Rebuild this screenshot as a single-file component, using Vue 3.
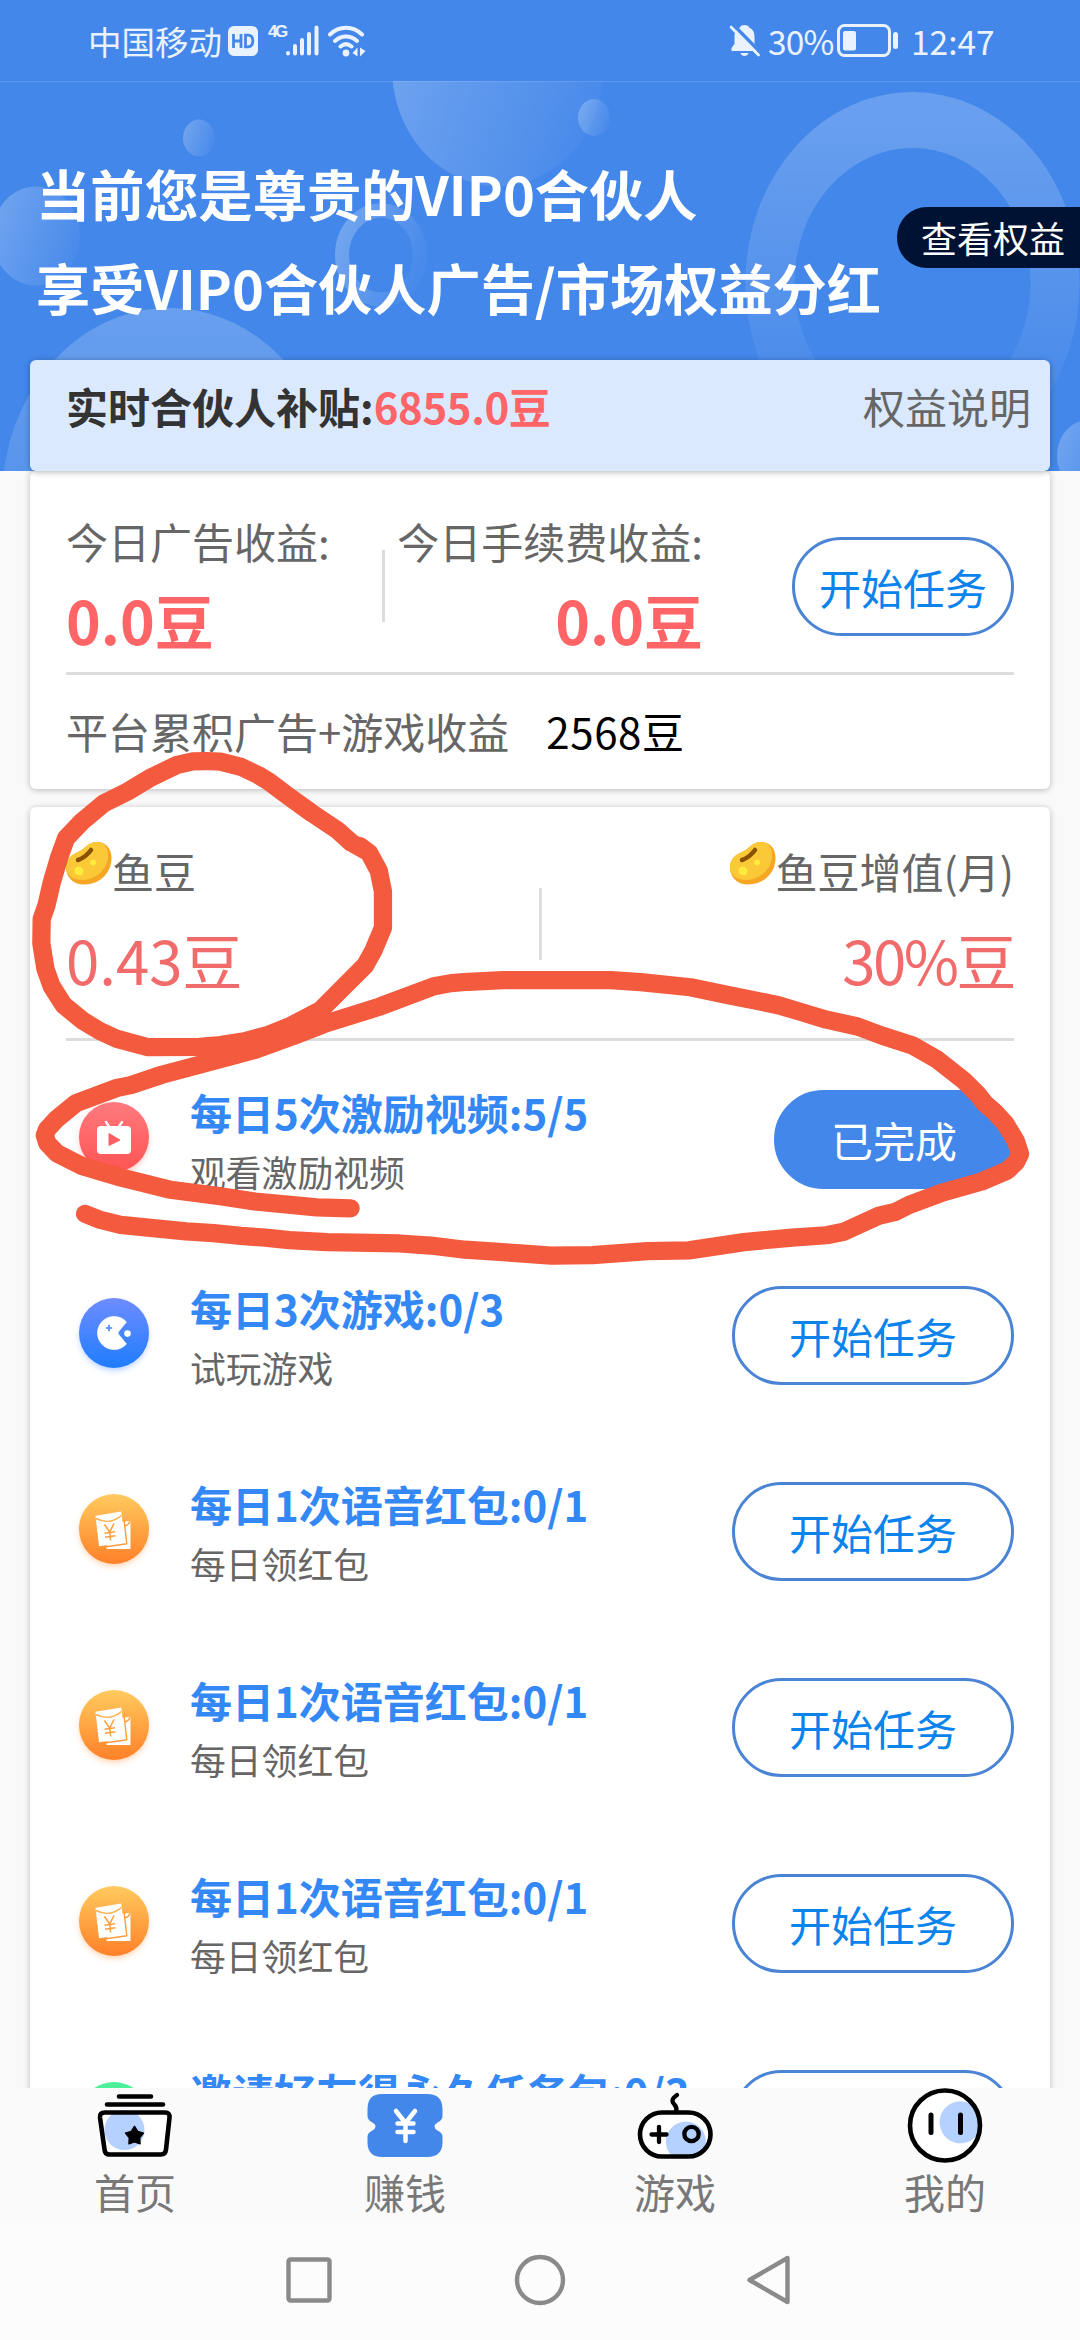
<script setup>
const tasks = [
  { icon: 'video', title: '每日5次激励视频:5/5', desc: '观看激励视频', done: true },
  { icon: 'game', title: '每日3次游戏:0/3', desc: '试玩游戏' },
  { icon: 'packet', title: '每日1次语音红包:0/1', desc: '每日领红包' },
  { icon: 'packet', title: '每日1次语音红包:0/1', desc: '每日领红包' },
  { icon: 'packet', title: '每日1次语音红包:0/1', desc: '每日领红包' },
  { icon: 'invite', title: '邀请好友得永久任务包:0/3', desc: '' }
]
const iconFill = { video: 'url(#gVideo)', game: 'url(#gGame)', packet: 'url(#gPacket)', invite: '#4cf09a' }
const glow = { video: '#ff5c5c', game: '#3c82ff', packet: '#ff8a30', invite: '#4cf09a' }
const tabs = [
  { id: 'home', label: '首页' },
  { id: 'earn', label: '赚钱' },
  { id: 'game', label: '游戏' },
  { id: 'me', label: '我的' }
]
</script>

<template>
  <div class="screen">
    <header class="status">
      <span class="carrier">中国移动</span>
      <svg class="hd" width="30" height="30" viewBox="0 0 30 30">
        <rect width="30" height="30" rx="6" fill="#eaf2fe" />
        <path d="M5.500 8v14M13 8v14M5.500 15H13M17.500 9.200v11.600h2.500c3.600 0 4.800-2 4.800-5.800s-1.200-5.800-4.800-5.800z" fill="none" stroke="#4387ea" stroke-width="2.800" />
      </svg>
      <span class="net">4G</span>
      <svg class="signal" width="33" height="31" viewBox="0 0 33 31" stroke="#eaf2fe" stroke-width="4" stroke-linecap="round">
        <path d="M2 28v.5M9 21v7.500M16 15v13.500M23 9v19.500M30.500 2.500v26" />
      </svg>
      <svg class="wifi" width="38" height="32" viewBox="0 0 38 32" fill="none" stroke="#eaf2fe" stroke-width="4" stroke-linecap="round">
        <path d="M2 9.500C11 .5 25 .5 34 9.500M7 16c6.500-6 15.500-6 22 0M12.500 21.500c3.500-3 7.500-3 11 0" />
        <circle cx="18" cy="28" r="3.400" fill="#eaf2fe" stroke="none" />
        <path d="M29.500 22.500v9l-5-3.500zM32 22.500v9l5.500-5.500z" fill="#eaf2fe" stroke="none" />
      </svg>
      <svg class="bell" width="30" height="33" viewBox="0 0 30 33">
        <path d="M10 3.500c1-3.200 8-3.200 9 0 4 1.500 5.500 5 5.500 9v7.500l3 4v3H1.500v-3l3-4v-7.500c0-4 1.500-7.500 5.500-9zM10.500 29h8c-1 4-7 4-8 0z" fill="#eaf2fe" />
        <path d="M3 .5L31 29" stroke="#4387ea" stroke-width="3.500" />
        <path d="M1 3L28.500 31" stroke="#eaf2fe" stroke-width="2.800" stroke-linecap="round" />
      </svg>
      <span class="pct">30%</span>
      <svg class="battery" width="62" height="33" viewBox="0 0 62 33">
        <rect x="1.500" y="1.500" width="51" height="30" rx="6" fill="none" stroke="#eaf2fe" stroke-width="3" />
        <rect x="6" y="7" width="13" height="19.500" rx="2" fill="#eaf2fe" />
        <rect x="56" y="8" width="5" height="17" rx="2.500" fill="#eaf2fe" />
      </svg>
      <span class="clock">12:47</span>
    </header>

    <section class="hero">
      <svg class="bubbles" width="1080" height="390" viewBox="0 81 1080 390">
        <defs>
          <linearGradient id="bubble" x1="0" y1="0.200" x2="1" y2="0.600">
            <stop offset="0" stop-color="#fff" stop-opacity=".25" />
            <stop offset="1" stop-color="#fff" stop-opacity=".03" />
          </linearGradient>
          <linearGradient id="fall" x1="0" y1="0" x2="0" y2="1">
            <stop offset="0" stop-color="#fff" stop-opacity=".2" />
            <stop offset="1" stop-color="#fff" stop-opacity="0" />
          </linearGradient>
        </defs>
        <ellipse cx="498" cy="68" rx="106" ry="118" fill="url(#bubble)" />
        <ellipse cx="199" cy="138" rx="16" ry="18.500" fill="url(#bubble)" />
        <ellipse cx="594" cy="117.500" rx="16" ry="18.500" fill="url(#bubble)" />
        <ellipse cx="36" cy="236" rx="44" ry="49.500" fill="url(#bubble)" />
        <ellipse cx="381" cy="255" rx="39" ry="44.500" fill="none" stroke="url(#bubble)" stroke-width="14" />
        <ellipse cx="169" cy="499" rx="167" ry="191" fill="url(#fall)" />
        <circle r="163" transform="translate(912.500 283) scale(.875 1)" fill="none" stroke="url(#fall)" stroke-width="56" />
        <ellipse cx="1088" cy="456" rx="31" ry="36" fill="url(#bubble)" />
        <rect y="81" width="1080" height="1" fill="#fff" opacity=".12" />
      </svg>
      <div class="titles">
        <p>当前您是尊贵的VIP0合伙人</p>
        <p>享受VIP0合伙人广告/市场权益分红</p>
      </div>
      <div class="badge">查看权益</div>
      <div class="banner">
        <b class="subsidy">实时合伙人补贴:<span class="amount">6855.0豆</span></b>
        <span class="explain">权益说明</span>
      </div>
    </section>

    <main class="content">
      <section class="card income">
        <div class="income-row">
          <div class="col first">
            <p class="label">今日广告收益:</p>
            <p class="big">0.0豆</p>
          </div>
          <i class="vline"></i>
          <div class="col second">
            <p class="label">今日手续费收益:</p>
            <p class="big">0.0豆</p>
          </div>
          <button class="btn narrow">开始任务</button>
        </div>
        <div class="total">
          <span class="total-label">平台累积广告+游戏收益</span><span class="total-num">2568豆</span>
        </div>
      </section>

      <section class="card list">
        <div class="beans">
          <div v-for="(b, i) in [['鱼豆', '0.43豆'], ['鱼豆增值(月)', '30%豆']]" :key="i" class="bean-col" :class="{ right: i }">
            <p class="bean-label">
              <svg class="bean" width="46" height="44" viewBox="0 0 46 44">
                <path d="M12 10C19 7 22 0 31 0c10 0 15 8 14.500 17C45 31 34 42.500 18 42.500 7 42.500 0 35 0 25.500 0 17 5 13 12 10z" fill="#f6a623" />
                <path d="M12 10C19 7 22 0 31 0c8 0 11 6 11 14 0 13-12 24-26 24C7 38 0 33 0 25.500 0 17 5 13 12 10z" fill="#fbc838" />
                <path d="M12 18c6-2 10-6 13-10" stroke="#8a5200" stroke-width="4.500" stroke-linecap="round" fill="none" />
                <circle cx="13" cy="29" r="4.500" fill="#ffeb3b" /><circle cx="27" cy="20.500" r="3" fill="#ffeb3b" />
              </svg>
              <span>{{ b[0] }}</span>
            </p>
            <p class="bean-num">{{ b[1] }}</p>
          </div>
          <i class="vline mid"></i>
        </div>

        <div v-for="(t, i) in tasks" :key="i" class="task">
          <svg class="task-icon" width="90" height="90" viewBox="-45 -45 90 90">
            <defs>
              <linearGradient id="gVideo" x1="0" y1="0" x2="0" y2="1"><stop offset="0" stop-color="#ff7a7e" /><stop offset="1" stop-color="#ff5353" /></linearGradient>
              <linearGradient id="gGame" x1="0" y1="0" x2="0" y2="1"><stop offset="0" stop-color="#6f8cff" /><stop offset="1" stop-color="#1f7dff" /></linearGradient>
              <linearGradient id="gPacket" x1="0" y1="0" x2="0" y2="1"><stop offset="0" stop-color="#ffcb5e" /><stop offset="1" stop-color="#ff8028" /></linearGradient>
              <filter id="soft" x="-30%" y="-30%" width="160%" height="160%"><feGaussianBlur stdDeviation="3" /></filter>
            </defs>
            <circle cy="3" r="34" :fill="glow[t.icon]" opacity=".4" filter="url(#soft)" />
            <circle r="35" :fill="iconFill[t.icon]" />
            <g v-if="t.icon === 'video'">
              <path d="M-8-15l4 6M8-15l-4 6" stroke="#fff" stroke-width="2.400" stroke-linecap="round" />
              <rect x="-17" y="-11" width="34" height="28" rx="4" fill="#fff" />
              <path d="M-5-3.500v12L6 3z" fill="#ff5f62" stroke="#ff5f62" stroke-width="1" stroke-linejoin="round" />
            </g>
            <g v-else-if="t.icon === 'game'">
              <path d="M12.500-11A16.600 16.600 0 1 0 12.500 11L4.500 1.200Q3.600 0 4.500-1.200z" fill="#fff" stroke="#fff" stroke-width=".6" stroke-linejoin="round" />
              <circle cx="13.500" cy=".6" r="3.300" fill="#fff" />
              <path d="M-5-8.200v6.400M-8.200-5h6.400" stroke="#4b86ff" stroke-width="1.700" />
            </g>
            <g v-else-if="t.icon === 'packet'">
              <path d="M9-7.500l7.500-.5V20H-7.500v-2z" fill="#fff" />
              <path d="M-18.500-13.300L7.200-17.500l4.200 31.300-26.400 3.500z" fill="#fff" />
              <path d="M13 14.800l-21 3M10-9.500l2.800 24.300M11-3q4-1.500 5-4.500" fill="none" stroke="#ff9d3c" stroke-width="1.400" />
              <path d="M-18-10.500Q-4-3.500 7.300-13.500" fill="none" stroke="#ffad48" stroke-width="1.400" />
              <path d="M-9.500-4.500l5.200 7.500 4.300-8.500M-4.300 3l1 8.500M-9.500 4.200l10.500-1.400M-9 8.200l10.500-1.400" fill="none" stroke="#ff9f3e" stroke-width="1.500" />
            </g>
          </svg>
          <div class="task-text">
            <p class="task-title">{{ t.title }}</p>
            <p class="task-desc">{{ t.desc }}</p>
          </div>
          <button class="btn" :class="{ done: t.done }">{{ t.done ? '已完成' : '开始任务' }}</button>
        </div>
      </section>
    </main>

    <nav class="tabs">
      <div v-for="t in tabs" :key="t.id" class="tab">
        <svg width="76" height="76" viewBox="0 0 76 76" fill="none" stroke="#000" stroke-width="4.600" stroke-linecap="round" stroke-linejoin="round">
          <template v-if="t.id === 'home'">
            <path d="M8 24.500h60q3.500 0 3 4l-4 34q-.5 5-5 5H14q-4.500 0-5-5l-4-34q0-4 3-4z" fill="#fff" stroke="none" />
            <circle cx="27.500" cy="42" r="20" fill="#b4d1ff" stroke="none" />
            <path d="M22 8.500h32M10 16.500h56M8 24.500h60q5 0 4.500 5l-3.500 32q-.5 5-5 5H12.500q-4.500 0-5-5L3 29.500q-.5-5 5-5z" />
            <path d="M37.500 38.500l3.200 5 5.800 1.600-3.800 4.700.3 5.900-5.500-2-5.500 2 .3-5.900-3.800-4.700 5.800-1.600z" fill="#000" stroke-width="1.500" />
          </template>
          <template v-else-if="t.id === 'earn'">
            <path d="M15 6h45q15.500 0 15.500 15v7q0 4-5 6.500-3 2-3 4t3 4q5 2.500 5 6v5.500Q75.500 69 60 69H15Q.5 69 .5 54v-5.500q0-3.500 5-6 3-2 3-4t-3-4Q.5 32 .5 28v-7Q.5 6 15 6z" fill="#4387ea" stroke="none" />
            <path d="M29 23l9.500 12L48 23M30.500 35.500h16M30.500 44h16M38.500 36v17" stroke="#fff" stroke-width="4.500" />
          </template>
          <template v-else-if="t.id === 'game'">
            <rect x="3" y="25" width="71" height="44" rx="22" fill="#fff" stroke="none" />
            <path d="M35 68a20 20 0 1 1 32-6q-4 5-12 6z" fill="#b4d1ff" stroke="none" />
            <rect x="3" y="24.500" width="70.500" height="44" rx="22" />
            <path d="M40 7c-6 4-5 7-3 9s3 4 2.500 8M22 39v15M14.500 46.500h15" stroke-width="4.300" />
            <circle cx="54.500" cy="46" r="7.200" stroke-width="4.300" />
          </template>
          <template v-else>
            <circle cx="38" cy="37.500" r="35" fill="#fff" stroke="none" />
            <path d="M68.500 19.500A21 21 0 1 0 71 46q3-15-2.500-26.500z" fill="#b4d1ff" stroke="none" />
            <circle cx="38" cy="37.500" r="35" />
            <path d="M24 27v17.500M53.500 27v17.500" stroke-width="5" />
          </template>
        </svg>
        <span>{{ t.label }}</span>
      </div>
    </nav>

    <footer class="sysnav">
      <svg width="1080" height="120" viewBox="0 0 1080 120" fill="none" stroke="#8a8a8a" stroke-width="4.400" stroke-linejoin="round">
        <rect x="288.500" y="39.500" width="41" height="41" rx="2" />
        <circle cx="540" cy="60" r="23" />
        <path d="M787.500 38v44L749.500 60z" />
      </svg>
    </footer>

    <svg class="marks" width="1080" height="540" viewBox="0 0 3136 1568" fill="none" stroke="#f45a3d" stroke-width="53" stroke-linecap="round" stroke-linejoin="round">
      <path d="M1060 320L1020 298 980 262 905 212 840 165 780 120 750 102 700 78 640 63 600 61 560 62 515 72 440 108 370 150 300 185 240 235 192 285 172 340 150 415 135 480 121 520 120 590 132 665 150 715 185 770 240 815 290 845 340 868 430 892 580 891 640 886 710 875 780 856 840 832 930 785 985 730 1060 655 1085 610 1112 545 1112 440 1100 380 1072 328 1045 308" />
      <path d="M1018 1360L920 1357 740 1340 640 1325 490 1305 350 1270 240 1238 165 1200 137 1170 130 1148 137 1130 165 1100 220 1055 340 1010 380 1002 470 972 590 940 740 900 850 860 940 825 1100 775 1260 715 1310 706 1360 702 1460 697 1773 697 1860 703 2005 718 2120 742 2260 770 2320 788 2400 812 2490 832 2560 858 2650 887 2720 927 2800 990 2840 1030 2860 1056 2890 1082 2920 1115 2950 1165 2962 1202 2950 1226 2925 1250 2850 1282 2740 1313 2640 1350 2600 1370 2550 1382 2450 1428 2400 1438 2300 1445 2160 1458 2000 1482 1880 1484 1720 1496 1600 1497 1500 1490 1350 1480 1250 1468 1160 1462 950 1458 840 1452 770 1445 700 1440 620 1432 540 1427 430 1416 350 1408 290 1393 247 1376" />
    </svg>
  </div>
</template>

<style>
body { margin: 0; }
</style>

<style scoped>
.screen {
  position: relative;
  width: 1080px;
  height: 2340px;
  overflow: hidden;
  display: flex;
  flex-direction: column;
  background: #f9f9f9;
  font-family: "Noto Sans CJK SC", sans-serif;
  font-size: 42px;
  color: #666;
}
p { margin: 0; white-space: nowrap; }
.status {
  height: 81px;
  flex: none;
  display: flex;
  align-items: center;
  box-sizing: border-box;
  padding-left: 88px;
  background: #4387ea;
  color: #eaf2fe;
  font-size: 33.500px;
  line-height: 79px;
  white-space: nowrap;
}
.carrier { width: 140px; }
.net { width: 18px; margin: -17px 0 0 10px; font: 700 17px/20px "Liberation Sans", sans-serif; letter-spacing: -2.500px; }
.wifi { margin-left: 9px; }
.bell { margin-left: 364px; }
.pct { width: 70px; margin-left: 8px; letter-spacing: -0.800px; }
.battery { margin-left: -1px; }
.clock { margin-left: 12px; }

.hero { position: relative; height: 390px; flex: none; background: #4387ea; }
.bubbles { position: absolute; left: 0; top: 0; }
.titles { position: relative; padding: 65px 0 0 36px; font-size: 54.200px; font-weight: 700; line-height: 93.500px; color: #fff; }
.badge {
  position: absolute;
  right: 0;
  top: 126px;
  width: 183px;
  height: 61px;
  box-sizing: border-box;
  padding-left: 24px;
  border-radius: 30px 0 0 30px;
  background: #001233;
  color: #fff;
  font-size: 36px;
  line-height: 61px;
}
.banner {
  position: relative;
  display: flex;
  justify-content: space-between;
  box-sizing: border-box;
  height: 111px;
  margin: 27px 30px 0;
  padding: 0 19px 0 36px;
  border-radius: 6px;
  background: #dbe9fe;
  box-shadow: 0 1px 6px rgba(0, 0, 0, .3);
  line-height: 92px;
}
.subsidy { color: #333; }
.amount { color: #ff6467; letter-spacing: -0.400px; }

.content { height: 1617px; flex: none; overflow: hidden; display: flex; flex-direction: column; gap: 18px; }
.card { margin: 0 30px; padding: 0 36px; background: #fff; border-radius: 6px; box-shadow: 0 1px 6px rgba(0, 0, 0, .26); flex: none; box-sizing: border-box; }
.income { height: 318px; }
.income-row { display: flex; height: 204px; box-sizing: border-box; border-bottom: 3px solid #ddd; }
.col { padding-top: 40px; }
.first { width: 316px; }
.second { margin-left: 12px; width: 306px; text-align: right; }
.label { line-height: 60px; }
.big { font-size: 59px; font-weight: 700; line-height: 98px; color: #ff6467; }
.vline { display: block; width: 3px; height: 72px; margin-top: 79px; background: #ddd; }
.btn {
  width: 282px;
  height: 99px;
  box-sizing: border-box;
  padding: 0;
  border: 3px solid #4b84d4;
  border-radius: 50px;
  background: #fff;
  color: #0a84ec;
  font: 42px/93px "Noto Sans CJK SC", sans-serif;
}
.narrow { width: 222px; margin: 66px 0 0 auto; }
.total { display: flex; line-height: 111px; }
.total-num { margin-left: 37px; color: #000; letter-spacing: .6px; }

.list { height: 1400px; }
.beans { position: relative; display: flex; justify-content: space-between; height: 234px; box-sizing: border-box; border-bottom: 3px solid #ddd; }
.bean-col { padding-top: 34px; }
.bean-label { display: flex; align-items: center; line-height: 60px; }
.bean { margin: -14px 0 0; }
.bean-num { font-size: 60px; line-height: 90px; margin-top: 13px; color: #f26b6b; }
.right { text-align: right; }
.right .bean-num { letter-spacing: -2.500px; }
.mid { position: absolute; left: 473px; top: 81px; margin: 0; }

.task { display: flex; height: 196px; box-sizing: border-box; padding-top: 49px; align-items: flex-start; }
.task-icon { margin: 2px 0 0 3px; }
.task-text { margin-left: 31px; flex: 1; }
.task-title { font-weight: 700; color: #3388f5; line-height: 44px; }
.task-desc { font-size: 35.800px; line-height: 50px; margin-top: 12px; }
.done { width: 240px; border-color: #4387ea; background: #4387ea; color: #fff; }

.tabs { height: 132px; flex: none; display: flex; background: #fafafa; position: relative; }
.tab { flex: 1; display: flex; flex-direction: column; align-items: center; color: #787878; }
.tab span { height: 60px; line-height: 60px; margin-top: -3px; font-size: 41px; }
.tab svg { flex: none; }
.sysnav { height: 120px; flex: none; background: #fcfcfc; }
.marks { position: absolute; left: 0; top: 740px; }
</style>
